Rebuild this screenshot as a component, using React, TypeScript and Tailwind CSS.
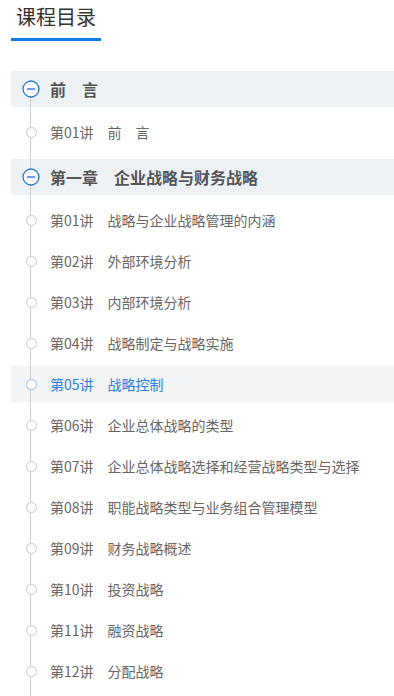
import React from "react";

type Lesson = { no: string; title: string; active?: boolean };
type Chapter = { no?: string; title: string; lessons: Lesson[] };

const chapters: Chapter[] = [
  { title: "前\u3000言", lessons: [{ no: "第01讲", title: "前\u3000言" }] },
  {
    no: "第一章",
    title: "企业战略与财务战略",
    lessons: [
      { no: "第01讲", title: "战略与企业战略管理的内涵" },
      { no: "第02讲", title: "外部环境分析" },
      { no: "第03讲", title: "内部环境分析" },
      { no: "第04讲", title: "战略制定与战略实施" },
      { no: "第05讲", title: "战略控制", active: true },
      { no: "第06讲", title: "企业总体战略的类型" },
      { no: "第07讲", title: "企业总体战略选择和经营战略类型与选择" },
      { no: "第08讲", title: "职能战略类型与业务组合管理模型" },
      { no: "第09讲", title: "财务战略概述" },
      { no: "第10讲", title: "投资战略" },
      { no: "第11讲", title: "融资战略" },
      { no: "第12讲", title: "分配战略" },
    ],
  },
];

const ChapterIcon = () => (
  <svg width="18" height="18" viewBox="0 0 18 18" className="relative z-10">
    <circle cx="9" cy="9" r="8" fill="#fff" stroke="#1f7ad6" strokeWidth="1.3" />
    <line x1="5" y1="9" x2="13" y2="9" stroke="#1f7ad6" strokeWidth="1.4" />
  </svg>
);

const LessonDot = ({ active }: { active?: boolean }) => (
  <span
    className={`relative z-10 block h-[11px] w-[11px] rounded-full border bg-white ${
      active ? "border-[#8fbdf0]" : "border-[#c8c8c8]"
    }`}
  />
);

export default function App() {
  return (
    <div
      className="h-[696px] w-[394px] overflow-hidden bg-white"
      style={{ fontFamily: '"Microsoft YaHei", "Noto Sans CJK SC", sans-serif' }}
    >
      <div className="pl-[11px]">
        <div className="inline-flex flex-col">
          <h2 className="h-[38px] px-[5px] pt-[2px] text-[20px] leading-[30px] text-[#333]">课程目录</h2>
          <div className="h-[3px] w-[90px] bg-[#0f7fe3]" />
        </div>
      </div>

      <div className="relative mt-[30px] pl-[11px]">
        <div className="absolute bottom-0 left-[30px] top-[18px] w-px bg-[#cfcfcf]" />
        {chapters.map((c) => (
          <div key={c.title}>
            <div className="flex h-9 items-center bg-[#eef2f5]">
              <div className="flex w-[39px] justify-center pl-px">
                <ChapterIcon />
              </div>
              <div className="flex text-[16px] font-bold text-[#555]">
                {c.no && <span className="mr-4">{c.no}</span>}
                <span>{c.title}</span>
              </div>
            </div>
            <div className="flex flex-col gap-[5px] pt-[7px] pb-[9px]">
              {c.lessons.map((l) => (
                <div
                  key={l.no}
                  className={`flex h-9 items-center ${l.active ? "bg-[#f3f4f6]" : ""}`}
                >
                  <div className="flex w-[39px] justify-center pl-px">
                    <LessonDot active={l.active} />
                  </div>
                  <div
                    className={`flex text-[14px] ${
                      l.active ? "text-[#2a7fe0]" : "text-[#666]"
                    }`}
                  >
                    <span className="mr-[14px]">{l.no}</span>
                    <span>{l.title}</span>
                  </div>
                </div>
              ))}
            </div>
          </div>
        ))}
      </div>
    </div>
  );
}
